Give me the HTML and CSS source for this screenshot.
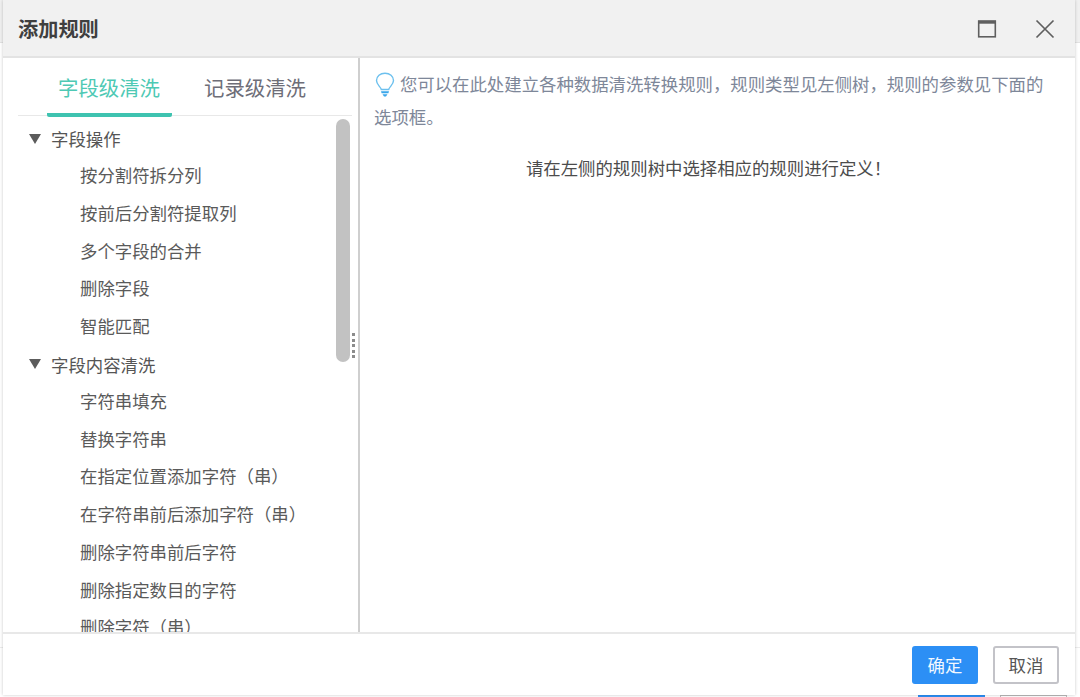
FILE: index.html
```html
<!DOCTYPE html>
<html lang="zh-CN">
<head>
<meta charset="utf-8">
<title>添加规则</title>
<link rel="stylesheet" href="styles.css">
</head>
<body>
<div class="backdrop">
  <div class="back-top"></div>
  <div class="back-rule"></div>
  <div class="back-actions"><span class="back-ok"></span><span class="back-cancel"></span></div>
</div>
<div class="modal">
  <header class="head">
    <h1 class="title">添加规则</h1>
    <div class="win-tools">
      <svg class="ico" width="20" height="20" viewBox="0 0 20 20"><rect x="1.7" y="2.2" width="16.6" height="15.6" fill="none" stroke="#5f5f5f" stroke-width="1.6"/><rect x="1" y="1.5" width="18" height="3.2" fill="#5f5f5f"/></svg>
      <svg class="ico" width="20" height="20" viewBox="0 0 20 20"><path d="M1.5 1.5 18.5 18.5M18.5 1.5 1.5 18.5" fill="none" stroke="#5f5f5f" stroke-width="1.7"/></svg>
    </div>
  </header>
  <div class="body">
    <aside class="side">
      <div class="tabs">
        <span class="tab active">字段级清洗</span>
        <span class="tab">记录级清洗</span>
      </div>
      <div class="tree">
        <div class="scrollbar"></div>
        <div class="group"><i class="tri"></i>字段操作</div>
        <div class="item first">按分割符拆分列</div>
        <div class="item">按前后分割符提取列</div>
        <div class="item">多个字段的合并</div>
        <div class="item">删除字段</div>
        <div class="item">智能匹配</div>
        <div class="group next"><i class="tri"></i>字段内容清洗</div>
        <div class="item first">字符串填充</div>
        <div class="item">替换字符串</div>
        <div class="item">在指定位置添加字符（串）</div>
        <div class="item">在字符串前后添加字符（串）</div>
        <div class="item">删除字符串前后字符</div>
        <div class="item">删除指定数目的字符</div>
        <div class="item">删除字符（串）</div>
      </div>
    </aside>
    <div class="splitter"><span class="grip"><b></b><b></b><b></b><b></b><b></b></span></div>
    <main class="main">
      <p class="hint"><svg class="bulb" width="20" height="26" viewBox="0 0 20 26"><path d="M6.300 17.500C5.800 14.800 1.500 13 1.500 8.600 1.500 4.300 5.200 1.200 10 1.200s8.500 3.100 8.500 7.400c0 4.400-4.300 6.200-4.800 8.900z" fill="#fff" stroke="#6cc0ee" stroke-width="1.400"/><path d="M6 19.200h8l-.6 2H6.600zM7.500 22.200h5L11 24.500H9z" fill="#3aa6ea"/></svg> 您可以在此处建立各种数据清洗转换规则，规则类型见左侧树，规则的参数见下面的选项框。</p>
      <p class="notice">请在左侧的规则树中选择相应的规则进行定义！</p>
    </main>
  </div>
  <footer class="foot">
    <button class="btn primary" type="button">确定</button>
    <button class="btn" type="button">取消</button>
  </footer>
</div>
</body>
</html>
```
FILE: styles.css
```css
* { box-sizing: border-box; }
html, body { margin: 0; height: 697px; overflow: hidden; }
body {
  background: #fff;
  font-family: "Noto Sans CJK SC", "Liberation Sans", sans-serif;
  color: #555;
}
.backdrop { height: 697px; display: flex; flex-direction: column; }
.back-top { height: 43px; flex: none; background: #f0f0f0; border-bottom: 1px solid #e2e2e2; }
.back-rule { height: 1px; flex: none; margin-top: 604px; background: #ececec; }
.back-actions { display: flex; justify-content: flex-end; gap: 15px; padding-right: 13px; height: 2px; margin-top: 47px; }
.back-ok { width: 67px; background: #2c8ff5; }
.back-cancel { width: 67px; border: 1px solid #bbb; border-bottom: 0; }

.modal {
  position: absolute; left: 3px; top: 0; width: 1072px; height: 695px;
  background: #fff; display: flex; flex-direction: column;
  box-shadow: 0 0 3px rgba(0,0,0,.22);
}
.head {
  height: 58px; flex: none; display: flex; align-items: center; justify-content: space-between;
  background: #f1f1f1; border-bottom: 2px solid #e3e3e3; padding: 2px 20px 0 15px;
}
.title { margin: 0; font-size: 20.200px; font-weight: 700; color: #3f3f3f; line-height: 28px; }
.win-tools { display: flex; gap: 38px; align-items: center; }
.ico { display: block; }

.body { flex: 1; min-height: 0; display: flex; }
.side { width: 355px; flex: none; display: flex; flex-direction: column; min-height: 0; padding-left: 15px; }
.tabs { display: flex; height: 58px; border-bottom: 1px solid #e8e8e8; padding-left: 29px; flex: none; width: 334px; }
.tab { font-size: 20.400px; line-height: 28px; padding: 15px 12px 0 11px; color: #6e6e78; width: 125px; height: 59px; white-space: nowrap; margin-right: 21px; }
.tab.active { color: #4ec9b4; border-bottom: 4px solid #3ec3b0; border-radius: 2px; }
.tree { position: relative; flex: 1; min-height: 0; overflow: hidden; padding-top: 8px; }
.scrollbar { position: absolute; right: 8px; top: 3px; width: 14px; height: 243px; border-radius: 7px; background: #c2c2c2; }
.group { height: 29px; line-height: 29px; font-size: 17.400px; color: #555; padding-left: 11px; display: flex; align-items: center; }
.group.next { margin-top: 5px; }
.tri { width: 0; height: 0; border-left: 6px solid transparent; border-right: 6px solid transparent; border-top: 10px solid #5c5c5c; margin-right: 10px; }
.item { height: 37.750px; line-height: 37.750px; font-size: 17.400px; padding-left: 62px; color: #5a5a5a; white-space: nowrap; }
.item.first { margin-top: 3px; }

.splitter { width: 2px; flex: none; background: #cfcfcf; position: relative; }
.grip { position: absolute; left: -6px; top: 275px; display: flex; flex-direction: column; gap: 2.500px; }
.grip b { display: block; width: 3px; height: 3px; background: #8c8c8c; }

.main { flex: 1; min-width: 0; padding: 9px 30px 0 14px; }
.hint { margin: 0; font-size: 17.400px; line-height: 33px; color: #7e8799; }
.bulb { vertical-align: -7px; margin: 0 1px 0 1px; }
.notice { margin: 18px 2px 0 0; font-size: 17.400px; line-height: 33px; text-align: center; color: #4c4c4c; }

.foot {
  height: 63px; flex: none; border-top: 2px solid #e8e8e8; background: #fff;
  display: flex; justify-content: flex-end; align-items: center; gap: 15px; padding: 0 16px 0 0;
}
.btn {
  width: 66px; height: 38px; padding: 0; border: 2px solid #c3c3c8; border-radius: 3px; background: #fff;
  font: 17.400px/1 "Noto Sans CJK SC", "Liberation Sans", sans-serif; color: #555;
}
.btn.primary { background: #2c8ff5; border-color: #2c8ff5; color: #f2f8ff; }
```
